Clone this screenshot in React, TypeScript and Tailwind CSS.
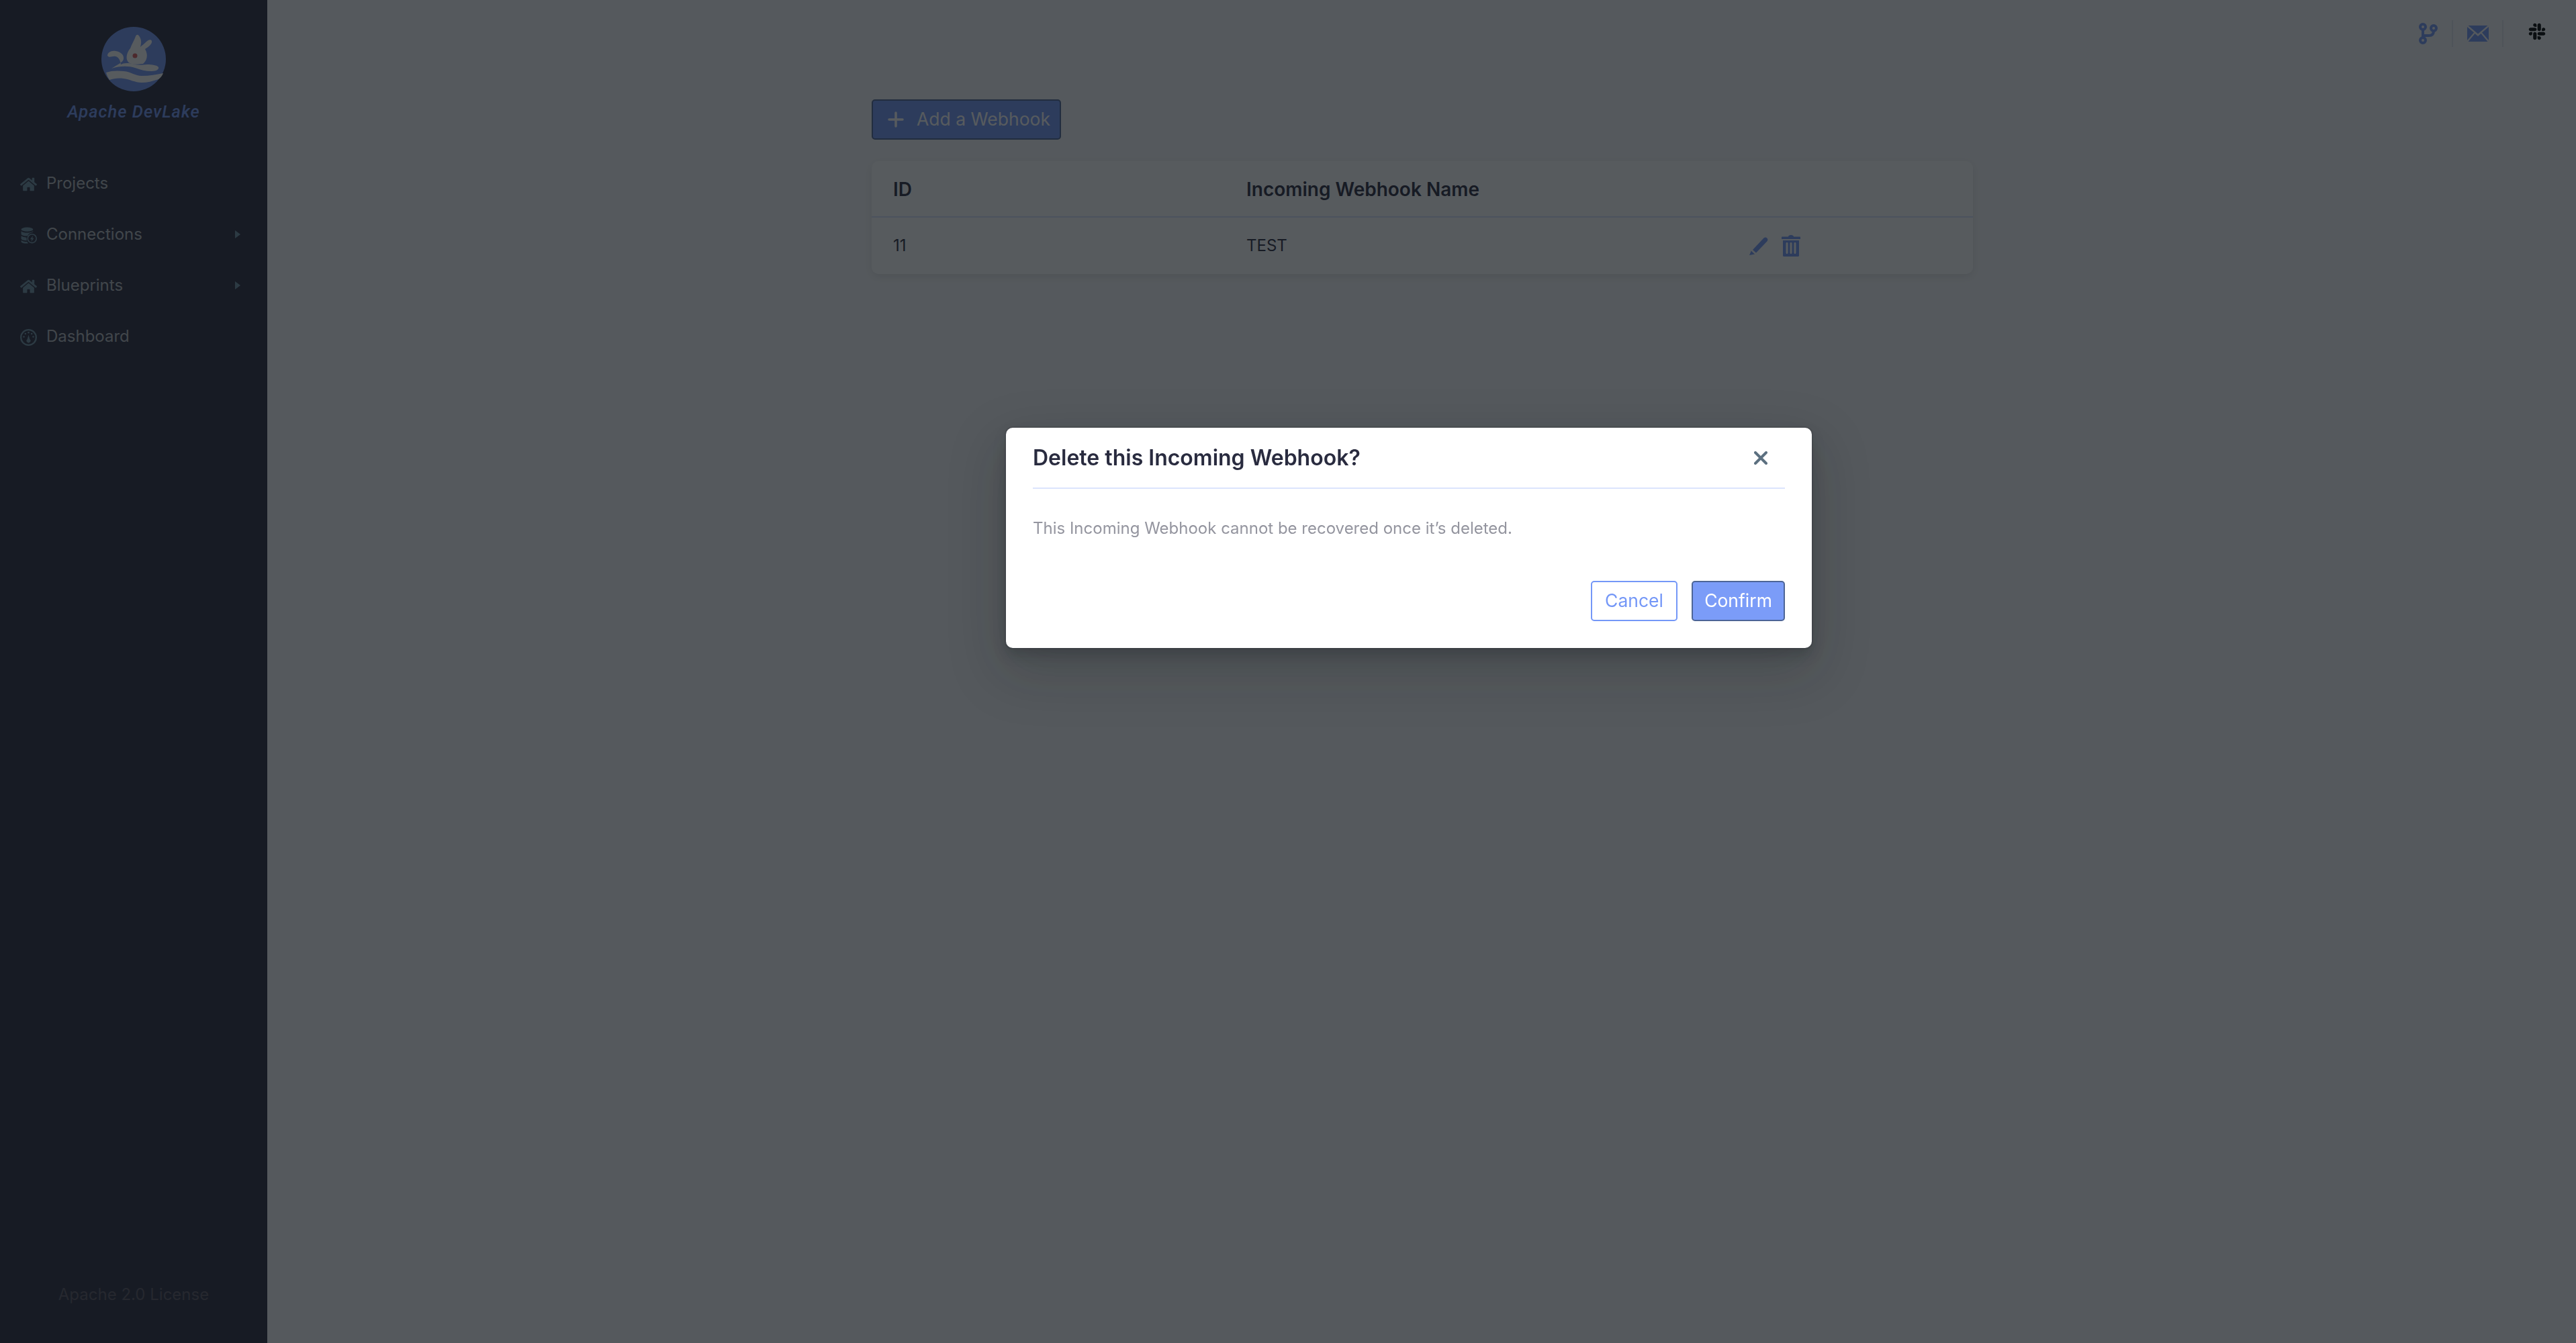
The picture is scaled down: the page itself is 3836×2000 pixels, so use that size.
import { FaHome, FaSlack } from 'react-icons/fa';

const font = { fontFamily: 'Inter, "Liberation Sans", sans-serif' };

const HomeIcon = () => <FaHome className="w-[25px] h-[25px] text-[#7091a6]" />;

const ConnectionsIcon = () => (
  <svg viewBox="0 0 24 24" className="w-[25px] h-[25px] text-[#7091a6]" fill="currentColor">
    <ellipse cx="10" cy="3.500" rx="8.500" ry="3" />
    <path d="M1.500 6v4c0 1.700 3.800 3 8.500 3h.6A8 8 0 0 1 16 8.200c1-.2 1.900-.7 2.500-1.200V6c-1.500 1.500-5 2.200-8.500 2.200S3 7.500 1.500 6z" />
    <path d="M1.500 12.500v4c0 1.600 3.500 3 7.500 3h.7a8 8 0 0 1-.4-4.500c-3.300-.1-6.400-1-7.800-2.500z" />
    <path d="M1.500 19v2c0 1.600 3.800 2.500 8.500 2.500h1.500a8 8 0 0 1-1.400-2.300c-3.600 0-7-.8-8.600-2.200z" />
    <path fillRule="evenodd" d="M17 9.500a7 7 0 1 0 0 14 7 7 0 0 0 0-14zm0 1.600a5.400 5.400 0 1 1 0 10.800 5.400 5.400 0 0 1 0-10.800zm1.300 1.400-4 5h2.300l-.9 3.500 4-5h-2.300z" />
  </svg>
);

const DashboardIcon = () => (
  <svg viewBox="0 0 24 24" className="w-[25px] h-[25px] text-[#7091a6]" fill="currentColor">
    <path
      fillRule="evenodd"
      d="M12 0a12 12 0 1 0 0 24 12 12 0 0 0 0-24zm0 2.200a9.800 9.800 0 1 1 0 19.600 9.800 9.800 0 0 1 0-19.600z"
    />
    <circle cx="12" cy="5" r="1.200" />
    <circle cx="7.500" cy="6.800" r="1.200" />
    <circle cx="16.500" cy="6.800" r="1.200" />
    <circle cx="5.300" cy="11" r="1.200" />
    <circle cx="18.700" cy="11" r="1.200" />
    <path d="M12 8.500l1.800 6.200a2.800 2.800 0 1 1-3.600 0z" />
  </svg>
);

const Caret = () => (
  <svg viewBox="0 0 8 12" className="w-[8px] h-[12px] text-[#7091a6]" fill="currentColor">
    <path d="M0 0l8 6-8 6z" />
  </svg>
);

const Logo = () => (
  <svg viewBox="0 0 96 96" className="w-[96px] h-[96px]">
    <circle cx="48" cy="48" r="48" fill="#7497f7" />
    {/* swirl and tail */}
    <path
      d="M9 43C9 38 15 35 21 36C29 37 34 42 33 48C32 53 24 56 15 62C28 58 40 58 50 61C58 64 66 66 75 66C82 66 86 63 85 60C83 57 75 56 68 56C60 57 55 57 50 56C40 53 33 54 29 56C28 50 26 45 21 44C16 43 12 47 9 43Z"
      fill="#fff"
    />
    {/* body and ears */}
    <path
      d="M62 55C68 50 70 42 65 33C70 30 76 25 75 21C74 18 70 19 67 22C64 25 60 28 58 30C59 26 60 22 58 17C56 12 53 10 51 14C49 20 45 26 43 32C38 38 36 46 39 51C41 55 48 57 62 55Z"
      fill="#fff"
    />
    <circle cx="50" cy="43" r="3.500" fill="#d9575a" />
    {/* wave */}
    <path
      d="M7 68C15 65 25 65 33 66C45 67 50 73 60 73C72 73 82 71 92 69C91 72 88 76 85 78C76 81 68 83 60 83C50 83 42 78 33 77C25 76 18 77 12 79C10 76 8 72 7 68Z"
      fill="#fff"
    />
  </svg>
);

const navItems = [
  { label: 'Projects', icon: <HomeIcon />, caret: false },
  { label: 'Connections', icon: <ConnectionsIcon />, caret: true },
  { label: 'Blueprints', icon: <HomeIcon />, caret: true },
  { label: 'Dashboard', icon: <DashboardIcon />, caret: false }
];

const Sidebar = () => (
  <aside className="w-[398px] shrink-0 h-full bg-[#292b3f] flex flex-col items-stretch">
    <div className="flex flex-col items-center pt-[40px]">
      <Logo />
      <div
        className="mt-[14px] text-[25.500px] leading-[32px] italic font-medium text-[#7497f7] tracking-[1px]"
        style={{ fontFamily: 'Roboto, sans-serif' }}
      >
        Apache DevLake
      </div>
    </div>
    <nav className="mt-[53px] flex flex-col pl-[30px] pr-[40px]">
      {navItems.map(item => (
        <div key={item.label} className="h-[76px] flex items-center">
          <span className="w-[39px] mt-[3px]">{item.icon}</span>
          <span className="flex-1 text-[24px] text-[#b4b8be]">{item.label}</span>
          {item.caret && <Caret />}
        </div>
      ))}
    </nav>
    <div className="mt-auto pb-[57px] text-center text-[24px] leading-[30px] text-[#5b5563]">
      Apache 2.0 License
    </div>
  </aside>
);

const TopBar = () => (
  <div className="h-[100px] flex items-start justify-end pt-[30px] text-[#7497f7]">
    <div className="h-[40px] flex items-center">
      <svg viewBox="0 0 28 32" className="w-[28px] h-[32px]" fill="none" stroke="currentColor" strokeWidth="4">
        <circle cx="6" cy="6" r="4" />
        <circle cx="6" cy="26" r="4" />
        <circle cx="22" cy="8" r="4" />
        <path d="M6 10v12M6 19h9c5 0 7-3 7-7" />
      </svg>
      <div className="w-[2px] h-[40px] bg-[#e0e4ef] mx-[21px]" />
      <svg viewBox="0 0 32 24" className="w-[32px] h-[24px]" fill="currentColor">
        <path d="M1.500 0h29L16 12.500z" />
        <path d="M0 2v20l10-11.500z" />
        <path d="M32 2v20L22 10.500z" />
        <path d="M1.500 24 11.500 12 16 16l4.500-4 10 12z" />
      </svg>
      <div className="w-[2px] h-[40px] bg-[#e0e4ef] ml-[20px] mr-[36px]" />
      <FaSlack className="w-[28px] h-[28px] mb-[7px] text-[#000]" />
    </div>
    <div className="w-[44px]" />
  </div>
);

const PencilIcon = () => (
  <svg viewBox="0 0 28 28" className="w-[28px] h-[28px] text-[#7497f7]" fill="currentColor">
    <path d="M5 20 21 3c1.500-1.600 3.500-2 5-.8 1.800 1.500 1.800 3.600.3 5.300L10 24.500z" />
    <path d="M2.800 21.500 8 26.500 0 28z" />
  </svg>
);

const TrashIcon = () => (
  <svg viewBox="0 0 28 32" className="w-[28px] h-[32px] text-[#7497f7]" fill="currentColor">
    <path d="M10 2.500C10 1 11.500 0 14 0s4 1 4 2.500h9c.6 0 1 .4 1 1V6H0V3.500c0-.6.4-1 1-1z" />
    <path
      fillRule="evenodd"
      d="M2 8h24v22.500c0 .9-.6 1.500-1.500 1.500h-21c-.9 0-1.500-.6-1.500-1.500zm6 3c-.8 0-1.500.7-1.500 1.500v14c0 .8.7 1.500 1.500 1.500s1.500-.7 1.500-1.500v-14c0-.8-.7-1.500-1.500-1.500zm6 0c-.8 0-1.500.7-1.500 1.500v14c0 .8.7 1.500 1.500 1.500s1.500-.7 1.500-1.500v-14c0-.8-.7-1.500-1.500-1.500zm6 0c-.8 0-1.500.7-1.500 1.500v14c0 .8.7 1.500 1.500 1.500s1.500-.7 1.500-1.500v-14c0-.8-.7-1.500-1.500-1.500z"
    />
  </svg>
);

const WebhookTable = () => (
  <div className="mt-[32px] bg-white rounded-[10px] shadow-[0_4px_14px_rgba(0,0,0,0.1)]">
    <div className="grid grid-cols-[526px_749px_1fr] h-[84px] pl-[32px] pt-[2px] items-center border-b-2 border-[#dbe4fd] text-[28px] font-semibold text-[#292b3f]">
      <div>ID</div>
      <div>Incoming Webhook Name</div>
      <div />
    </div>
    <div className="grid grid-cols-[526px_749px_1fr] h-[84px] pl-[32px] items-center text-[24px] text-[#292b3f]">
      <div>11</div>
      <div>TEST</div>
      <div className="flex items-center gap-[20px]">
        <PencilIcon />
        <TrashIcon />
      </div>
    </div>
  </div>
);

const DeleteDialog = () => (
  <div className="fixed inset-0 bg-[rgba(16,22,26,0.7)] pl-[1498px] pt-[637px]">
    <div className="w-[1200px] h-[328px] bg-white rounded-[10px] px-[40px] shadow-[0_0_0_2px_rgba(16,22,26,0.1),0_10px_19px_rgba(16,22,26,0.2),0_30px_80px_10px_rgba(16,22,26,0.2)]">
      <div className="h-[91px] flex items-center justify-between border-b-2 border-[#dbe4fd]">
        <h2 className="text-[32px] font-semibold text-[#292b3f]">Delete this Incoming Webhook?</h2>
        <svg viewBox="0 0 20 20" className="w-[20px] h-[20px] mr-[26px] text-[#5c7080]" fill="none" stroke="currentColor" strokeWidth="4" strokeLinecap="round">
          <path d="M2 2l16 16M18 2 2 18" />
        </svg>
      </div>
      <p className="mt-[44px] text-[24px] leading-[30px] text-[#94959f]">
        This Incoming Webhook cannot be recovered once it’s deleted.
      </p>
      <div className="mt-[63px] flex justify-end gap-[21px]">
        <button className="w-[129px] h-[60px] rounded-[5px] border-2 border-[#7497f7] bg-white text-[#7497f7] text-[26.500px]">
          Cancel
        </button>
        <button className="w-[139px] h-[60px] rounded-[5px] border-2 border-[#4d6596] bg-[#7b9cf8] text-white text-[26.500px]">
          Confirm
        </button>
      </div>
    </div>
  </div>
);

export default function App() {
  return (
    <div className="flex h-screen bg-[#f9f9fb] overflow-hidden" style={font}>
      <Sidebar />
      <main className="flex-1 flex flex-col">
        <TopBar />
        <div className="ml-[900px] w-[1640px] mt-[48px]">
          <button className="w-[282px] h-[60px] flex items-center rounded-[5px] border-2 border-[#4d6596] bg-[#7497f7] pl-[22px] text-white text-[26.500px] whitespace-nowrap">
            <svg viewBox="0 0 24 24" className="w-[24px] h-[24px] mr-[19px]" fill="none" stroke="currentColor" strokeWidth="3.500" strokeLinecap="round">
              <path d="M12 2v20M2 12h20" />
            </svg>
            Add a Webhook
          </button>
          <WebhookTable />
        </div>
      </main>
      <DeleteDialog />
    </div>
  );
}
